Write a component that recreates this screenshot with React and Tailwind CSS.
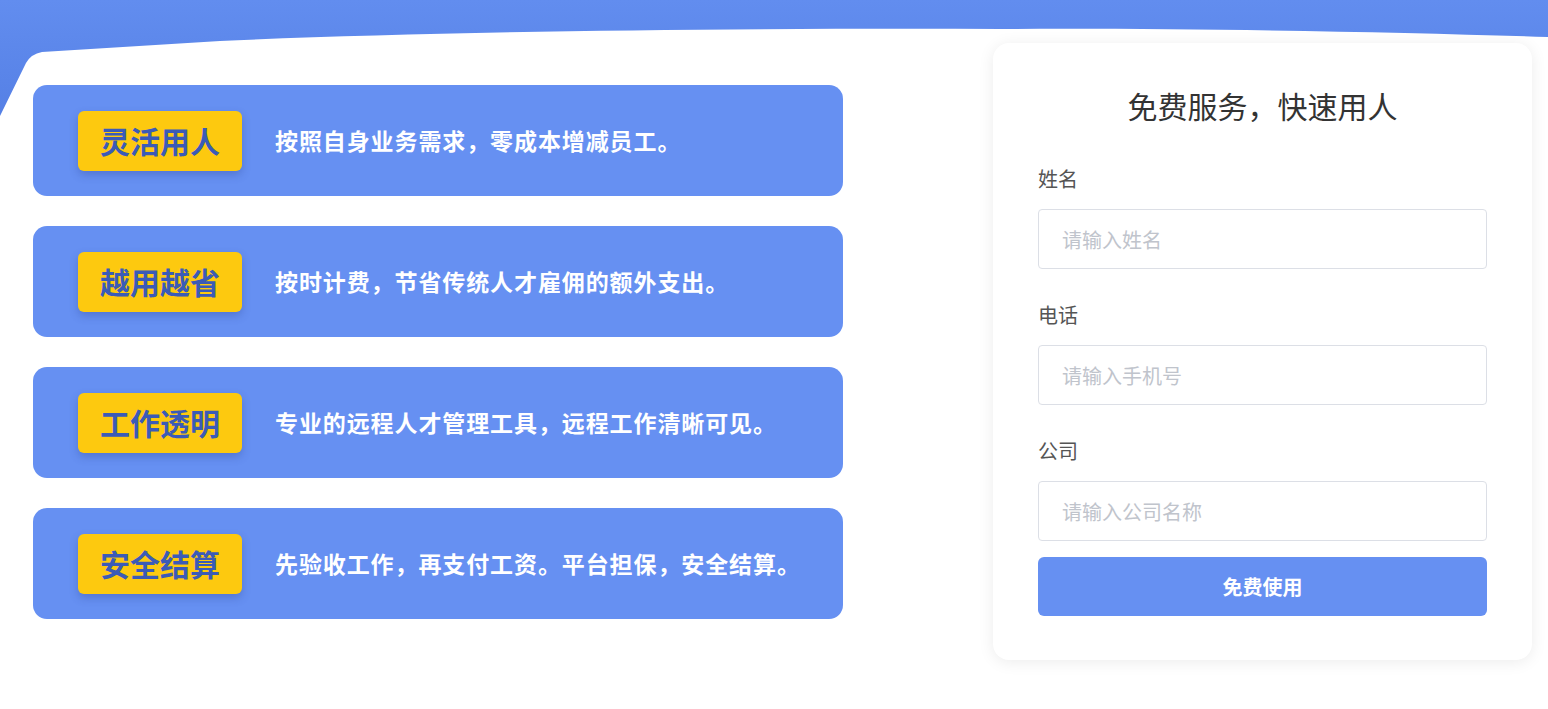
import React from "react";

const features = [
  { tag: "灵活用人", desc: "按照自身业务需求，零成本增减员工。" },
  { tag: "越用越省", desc: "按时计费，节省传统人才雇佣的额外支出。" },
  { tag: "工作透明", desc: "专业的远程人才管理工具，远程工作清晰可见。" },
  { tag: "安全结算", desc: "先验收工作，再支付工资。平台担保，安全结算。" },
];

const fields = [
  { label: "姓名", placeholder: "请输入姓名" },
  { label: "电话", placeholder: "请输入手机号" },
  { label: "公司", placeholder: "请输入公司名称" },
];

function TopWave() {
  return (
    <svg
      className="absolute top-0 left-0 w-full h-[130px]"
      viewBox="0 0 1548 130"
      preserveAspectRatio="none"
    >
      <defs>
        <linearGradient id="wave" x1="0" y1="0" x2="0" y2="1">
          <stop offset="0" stopColor="#628def" />
          <stop offset="1" stopColor="#5580e5" />
        </linearGradient>
      </defs>
      <path
        d="M0,0 H1548 V37 C1400,32 1200,28 1000,29 C700,28 420,32 220,41 L42,52 Q31,54 26,63 L0,116 Z"
        fill="url(#wave)"
      />
    </svg>
  );
}

function App() {
  return (
    <div
      className="relative min-h-screen bg-white overflow-hidden"
      style={{ fontFamily: '"Noto Sans CJK SC", "Noto Sans", sans-serif' }}
    >
      <TopWave />
      <div className="relative flex items-start">
        <div className="ml-[33px] mt-[85px] w-[810px] flex flex-col gap-[30px]">
          {features.map((f) => (
            <div key={f.tag} className="h-[111px] rounded-[14px] bg-[#6690f2] flex items-center pl-[45px]">
              <div className="w-[164px] h-[60px] rounded-md bg-[#fdc90f] shadow-[0_4px_8px_rgba(40,60,140,0.3)] flex items-center justify-center text-[30px] font-bold text-[#3b5bb7]">
                {f.tag}
              </div>
              <div className="ml-[33px] text-[23px] font-bold text-white tracking-[0.9px]">{f.desc}</div>
            </div>
          ))}
        </div>
        <div className="ml-[150px] mt-[43px] w-[539px] bg-white rounded-2xl shadow-[0_2px_16px_rgba(0,0,0,0.08)] px-[45px] pt-[40px] pb-[44px]">
          <h2 className="text-center text-[30px] text-[#333] leading-[44px]">免费服务，快速用人</h2>
          <div className="mt-[36px] flex flex-col gap-[30px]">
            {fields.map((fld) => (
              <div key={fld.label} className="flex flex-col">
                <label className="text-[20px] text-[#555] leading-[31px]">{fld.label}</label>
                <input
                  type="text"
                  placeholder={fld.placeholder}
                  className="mt-[15px] h-[60px] w-full rounded border border-[#dcdfe6] px-[23px] text-[20px] outline-none placeholder:text-[#c0c4cc]"
                />
              </div>
            ))}
          </div>
          <button className="mt-[16px] w-full h-[59px] rounded-md bg-[#6690f2] text-white text-[20px] font-bold">
            免费使用
          </button>
        </div>
      </div>
    </div>
  );
}

export default App;
